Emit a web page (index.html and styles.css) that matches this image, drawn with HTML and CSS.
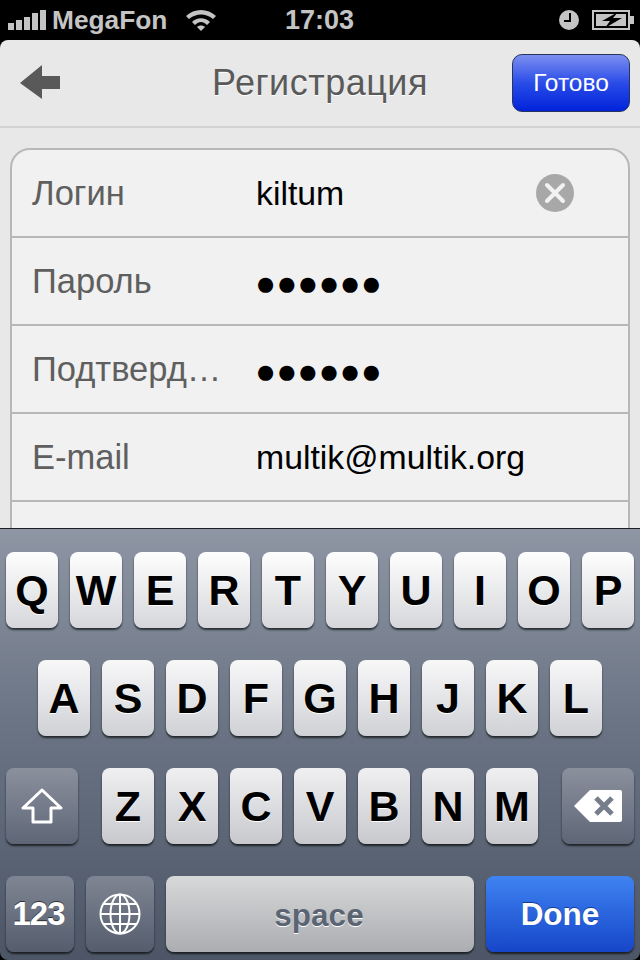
FILE: index.html
```html
<!DOCTYPE html>
<html lang="en">
<head>
    <meta charset="UTF-8">
    <meta name="viewport" content="width=device-width, initial-scale=1.0">
    <title>Регистрация</title>
    <link rel="stylesheet" href="styles.css">
</head>
<body>
    <div class="screen">
        <div class="status-bar">
            <div class="status-left">
                <svg class="signal" width="38" height="20" viewBox="0 0 38 20">
                    <rect x="0" y="13" width="6" height="7" fill="#c4c4c4"/>
                    <rect x="8" y="10" width="6" height="10" fill="#c4c4c4"/>
                    <rect x="16" y="7" width="6" height="13" fill="#c4c4c4"/>
                    <rect x="24" y="3" width="6" height="17" fill="#c4c4c4"/>
                    <rect x="32" y="0" width="6" height="20" fill="#c4c4c4"/>
                </svg>
                <span class="carrier">MegaFon</span>
                <svg class="wifi" width="32" height="24" viewBox="0 0 32 24">
                    <path d="M1 8 C9 0 23 0 31 8 L28 11 C21 5 11 5 4 11 Z" fill="#c4c4c4"/>
                    <path d="M7 14 C12 9 20 9 25 14 L22 17 C18 13 14 13 10 17 Z" fill="#c4c4c4"/>
                    <path d="M12 19 C14 17 18 17 20 19 L16 23 Z" fill="#c4c4c4"/>
                </svg>
            </div>
            <span class="clock">17:03</span>
            <div class="status-right">
                <svg class="alarm" width="20" height="20" viewBox="0 0 20 20">
                    <circle cx="10" cy="10" r="10" fill="#c4c4c4"/>
                    <path d="M11 3 V11 H5" fill="none" stroke="#000" stroke-width="2"/>
                </svg>
                <svg class="battery" width="42" height="20" viewBox="0 0 42 20">
                    <rect x="1" y="1" width="36" height="18" fill="none" stroke="#c4c4c4" stroke-width="2"/>
                    <rect x="4" y="4" width="30" height="12" fill="#c4c4c4"/>
                    <rect x="38" y="6" width="4" height="8" fill="#c4c4c4"/>
                    <path d="M26 2 L10 11 H18 L13 18 L30 8 H21 Z" fill="#000"/>
                </svg>
            </div>
        </div>

        <div class="nav-bar">
            <svg class="back-arrow" width="42" height="36" viewBox="0 0 42 36">
                <path d="M0 18 L22 0 V11 H40 V24 H22 V34 Z" fill="#595959"/>
            </svg>
            <h1 class="nav-title">Регистрация</h1>
            <button class="done-btn">Готово</button>
        </div>

        <div class="content">
            <div class="form-group">
                <div class="form-row">
                    <span class="row-label">Логин</span>
                    <span class="row-value">kiltum</span>
                    <svg class="clear-btn" width="38" height="38" viewBox="0 0 38 38">
                        <circle cx="19" cy="19" r="19" fill="#a8a8a8"/>
                        <path d="M11 11 L27 27 M27 11 L11 27" stroke="#f2f2f2" stroke-width="4" stroke-linecap="round"/>
                    </svg>
                </div>
                <div class="form-row">
                    <span class="row-label">Пароль</span>
                    <span class="row-value dots">●●●●●●</span>
                </div>
                <div class="form-row">
                    <span class="row-label">Подтверд…</span>
                    <span class="row-value dots">●●●●●●</span>
                </div>
                <div class="form-row">
                    <span class="row-label">E-mail</span>
                    <span class="row-value">multik@multik.org</span>
                </div>
                <div class="form-row"></div>
            </div>
        </div>

        <div class="keyboard">
            <div class="key-row">
                <div class="key">Q</div>
                <div class="key">W</div>
                <div class="key">E</div>
                <div class="key">R</div>
                <div class="key">T</div>
                <div class="key">Y</div>
                <div class="key">U</div>
                <div class="key">I</div>
                <div class="key">O</div>
                <div class="key">P</div>
            </div>
            <div class="key-row">
                <div class="key">A</div>
                <div class="key">S</div>
                <div class="key">D</div>
                <div class="key">F</div>
                <div class="key">G</div>
                <div class="key">H</div>
                <div class="key">J</div>
                <div class="key">K</div>
                <div class="key">L</div>
            </div>
            <div class="key-row">
                <div class="key dark wide shift-key">
                    <svg width="42" height="36" viewBox="0 0 42 36">
                        <path d="M21 2 L40 20 H30 V34 H12 V20 H2 Z" fill="none" stroke="#fff" stroke-width="3" stroke-linejoin="round"/>
                    </svg>
                </div>
                <div class="key">Z</div>
                <div class="key">X</div>
                <div class="key">C</div>
                <div class="key">V</div>
                <div class="key">B</div>
                <div class="key">N</div>
                <div class="key">M</div>
                <div class="key dark wide back-key">
                    <svg width="48" height="32" viewBox="0 0 48 32">
                        <path d="M16 0 H46 Q48 0 48 2 V30 Q48 32 46 32 H16 L0 16 Z" fill="#fff"/>
                        <path d="M22 8 L38 24 M38 8 L22 24" stroke="#767d8b" stroke-width="5"/>
                    </svg>
                </div>
            </div>
            <div class="key-row bottom-row">
                <div class="key dark num-key">123</div>
                <div class="key dark globe-key">
                    <svg width="42" height="42" viewBox="0 0 42 42" fill="none" stroke="#fff" stroke-width="2">
                        <circle cx="21" cy="21" r="19.5"/>
                        <ellipse cx="21" cy="21" rx="9.5" ry="19.5"/>
                        <path d="M21 1.5 V40.5 M1.5 21 H40.5 M4.5 11 H37.5 M4.5 31 H37.5"/>
                    </svg>
                </div>
                <div class="key space-key">space</div>
                <div class="key done-key">Done</div>
            </div>
        </div>
    </div>
</body>
</html>
```

FILE: styles.css
```css
* {
    box-sizing: border-box;
}

html, body {
    margin: 0;
    height: 100%;
    background-color: #000;
}

body {
    font-family: "Liberation Sans", Arial, sans-serif;
}

.screen {
    width: 640px;
    height: 960px;
    display: flex;
    flex-direction: column;
    overflow: hidden;
    background-color: #000;
}

/* Status bar */
.status-bar {
    height: 40px;
    flex-shrink: 0;
    display: flex;
    align-items: center;
    position: relative;
    padding: 0 6px 0 8px;
    color: #c4c4c4;
}

.status-left {
    display: flex;
    align-items: center;
}

.signal {
    margin-right: 6px;
}

.carrier {
    font-size: 26.3px;
    font-weight: bold;
}

.wifi {
    margin-left: 18px;
}

.clock {
    position: absolute;
    left: -1px;
    right: 0;
    text-align: center;
    font-size: 27px;
    font-weight: bold;
}

.status-right {
    display: flex;
    align-items: center;
    gap: 13px;
    margin-left: auto;
}

/* Nav bar */
.nav-bar {
    height: 88px;
    flex-shrink: 0;
    display: flex;
    align-items: center;
    justify-content: space-between;
    position: relative;
    padding: 0 10px 0 20px;
    background-color: #e8e8e8;
    border-bottom: 2px solid #d2d2d2;
    border-radius: 8px 8px 0 0;
}

.nav-title {
    position: absolute;
    left: 0;
    right: 0;
    margin: 0;
    text-align: center;
    font-size: 36px;
    letter-spacing: 0.5px;
    font-weight: normal;
    color: #5a5a5a;
    text-shadow: 0 1px 0 #fff;
}

.done-btn {
    width: 118px;
    height: 58px;
    position: relative;
    padding: 0;
    border: 1px solid #28345c;
    border-radius: 10px;
    background: linear-gradient(#7c8ff0, #2a4ce8 50%, #0023da);
    color: #fff;
    font-family: inherit;
    font-size: 24.5px;
}

/* Form */
.content {
    flex: 1;
    min-height: 0;
    overflow: hidden;
    padding: 20px 10px 0;
    background-color: #e8e8e8;
}

.form-group {
    border: 2px solid #b8b8b8;
    border-radius: 20px;
    background-color: #f1f1f1;
}

.form-row {
    height: 88px;
    display: flex;
    align-items: center;
    padding: 0 54px 0 20px;
    border-bottom: 2px solid #b8b8b8;
}

.form-row:last-child {
    border-bottom: none;
}

.row-label {
    width: 224px;
    flex-shrink: 0;
    font-size: 34.5px;
    color: #5f5f5f;
}

.row-value {
    flex: 1;
    font-size: 33.8px;
    color: #000;
}

.dots {
    margin-left: -1px;
    font-size: 35px;
    line-height: 1;
    padding-top: 3px;
}

/* Keyboard */
.keyboard {
    height: 432px;
    flex-shrink: 0;
    display: flex;
    flex-direction: column;
    gap: 32px;
    padding: 23px 6px 0;
    border-top: 1px solid #1c1f26;
    border-radius: 0 0 8px 8px;
    background: linear-gradient(#8e96a4, #6b7484 45%, #4d5666);
}

.key-row {
    display: flex;
    justify-content: center;
    gap: 12px;
}

.key {
    width: 52px;
    height: 76px;
    display: flex;
    align-items: center;
    justify-content: center;
    border-radius: 8px;
    background: linear-gradient(#fefefe, #d6d7db);
    box-shadow: 0 2px 2px rgba(0, 0, 0, 0.65);
    color: #000;
    font-size: 43px;
    font-weight: bold;
    text-shadow: 0 1px 0 #fff;
}

.key-row:nth-child(2) .key {
    background: linear-gradient(#f8f8f9, #d0d1d5);
}

.key-row:nth-child(3) .key {
    background: linear-gradient(#f0f0f2, #c8c9cd);
}

.key-row .key.dark {
    background: linear-gradient(#8b909d, #5e6677);
    color: #fff;
    text-shadow: 0 -1px 0 rgba(0, 0, 0, 0.6);
}

.key-row .key.num-key,
.key-row .key.globe-key {
    background: linear-gradient(#7f8593, #555d6d);
}

.key.wide {
    width: 72px;
}

.shift-key {
    margin-right: 12px;
}

.back-key {
    margin-left: 12px;
}

.num-key {
    width: 68px;
    padding-right: 3px;
    font-size: 33px;
    letter-spacing: -1px;
}

.globe-key {
    width: 68px;
}

.space-key {
    width: 308px;
    padding: 3px 2px 0 0;
    background: linear-gradient(#d6d8d9, #acadb1);
    color: #5b6473;
    font-size: 31.5px;
}

.done-key {
    width: 148px;
    background: linear-gradient(#3f83f2, #1646c8);
    color: #fff;
    font-size: 31.5px;
    text-shadow: 0 -1px 0 #123a94;
}
```
